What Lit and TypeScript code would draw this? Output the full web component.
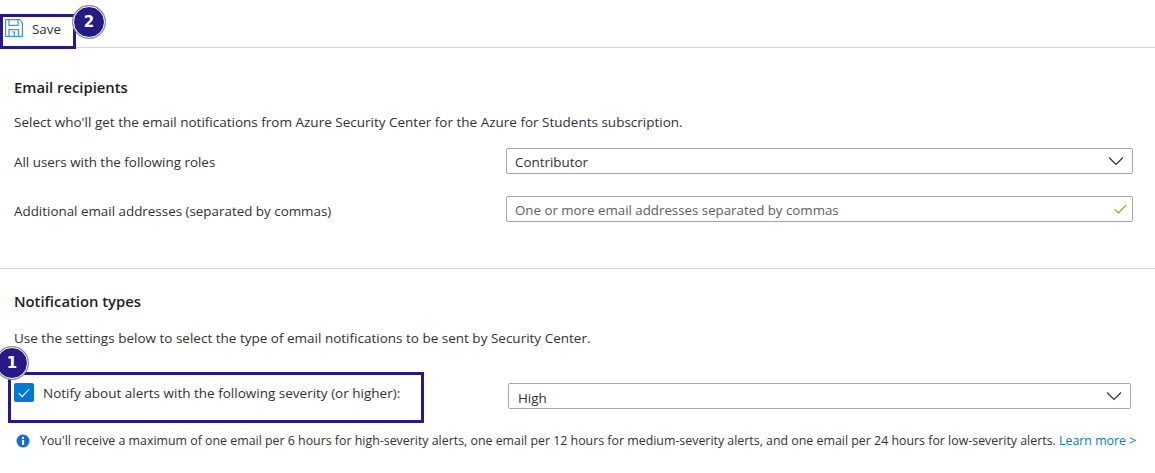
import { LitElement, html, css } from "lit";
import { customElement } from "lit/decorators.js";

@customElement("app-root")
export class AppRoot extends LitElement {
  static styles = css`
    :host { display: block; position: relative; width: 1155px; height: 473px; overflow: hidden; background: #fff;
      font-family: "Open Sans", "Noto Sans", sans-serif; font-size: 13.4px; color: #323130; }
    .toolbar { height: 38px; border-bottom: 1px solid #d6d6d6; display: flex; align-items: flex-end; padding: 0 0 9px 5px; gap: 9px; }
    .toolbar svg { display: block; margin-bottom: 1px; }
    .toolbar span { line-height: 20px; margin-bottom: -1px; }
    .section { padding: 0 22px 0 14px; }
    .s1 { height: 220px; border-bottom: 1px solid #d6d6d6; }
    h2 { margin: 0; font-size: 14.8px; font-weight: 600; color: #201f1e; line-height: 20px; }
    .s1 h2 { padding-top: 29px; }
    .s2 h2 { padding-top: 22px; }
    p { margin: 0; line-height: 18px; font-size: 13.5px; }
    .s1 p { margin-top: 16px; }
    .s2 p { margin-top: 18px; }
    .row { display: grid; grid-template-columns: 492px 627px; align-items: center; height: 26px; }
    .r1 { margin-top: 17px; }
    .r2 { margin-top: 22px; }
    .r1 > span { padding-top: 2px; }
    .r2 > span { padding-top: 4px; }
    .field { box-sizing: border-box; height: 26px; border: 1px solid #a6a6a6; border-radius: 2px; display: flex; align-items: center; justify-content: space-between; padding: 0 8px 0 8px; }
    .field > span { padding-top: 1px; }
    .r2 .field { padding-right: 5px; }
    .ph { color: #605e5c; font-size: 13.3px; padding-top: 2px !important; }
    .notify { display: grid; grid-template-columns: 494px 623px; margin-top: 36px; height: 26px; }
    .notify .field { padding-left: 9px; }
    .notify .field > span { padding-top: 3px; }
    .check { display: flex; align-items: flex-start; gap: 9px; }
    .box { width: 20px; height: 19px; background: #0078d4; border-radius: 2px; display: flex; align-items: center; justify-content: center; }
    .check span { line-height: 18px; font-size: 13.5px; padding-top: 1px; }
    .info { display: flex; align-items: center; gap: 10px; margin-top: 23px; padding-left: 2px; white-space: nowrap; font-size: 12.38px; line-height: 18px; }
    .info svg { flex: none; }
    .info a { color: #0078d4; text-decoration: none; }
    .mark { position: absolute; box-sizing: border-box; border: 3px solid #261a85; }
    .m-save { left: 0; top: 14px; width: 76px; height: 35px; }
    .m-notify { left: 8px; top: 372px; width: 416px; height: 51px; }
    .badge { position: absolute; box-sizing: border-box; width: 32px; height: 32px; border-radius: 50%; background: #261a85; border: 1.5px solid #fff; color: #fff; font-family: "DejaVu Sans", sans-serif; font-weight: 700; font-size: 15px; display: flex; align-items: center; justify-content: center; box-shadow: 0 0 0 1px #8a8a8a; }
    .b2 { left: 73px; top: 6px; }
    .b1 { left: -4px; top: 347px; }
  `;

  private chevron() {
    return html`<svg width="16" height="10" viewBox="0 0 16 10"><path d="M1 1.5 8 8.5 15 1.5" fill="none" stroke="#323130" stroke-width="1.2"/></svg>`;
  }

  render() {
    return html`
      <div class="toolbar">
        <svg width="18" height="18" viewBox="0 0 18 18" fill="none" stroke="#3a96dd" stroke-width="1.2">
          <path d="M.6.6h14l2.8 2.8v14H.6z"/><path d="M4 .8v5.6h9V.8"/><path d="M4 17.2v-6.6h9.5v6.6"/><path d="M6.8 13h2.6v4"/>
        </svg>
        <span>Save</span>
      </div>
      <div class="section s1">
        <h2>Email recipients</h2>
        <p>Select who'll get the email notifications from Azure Security Center for the Azure for Students subscription.</p>
        <div class="row r1"><span>All users with the following roles</span>
          <div class="field"><span>Contributor</span>${this.chevron()}</div></div>
        <div class="row r2"><span>Additional email addresses (separated by commas)</span>
          <div class="field"><span class="ph">One or more email addresses separated by commas</span>
            <svg width="13" height="10" viewBox="0 0 13 10"><path d="M.8 5.4 4.4 9 12.4.8" fill="none" stroke="#6bb700" stroke-width="1.1"/></svg></div></div>
      </div>
      <div class="section s2">
        <h2>Notification types</h2>
        <p>Use the settings below to select the type of email notifications to be sent by Security Center.</p>
        <div class="notify">
          <div class="check"><div class="box"><svg width="12" height="10" viewBox="0 0 12 10"><path d="M.8 5.2 4.2 8.6 11.2 1" fill="none" stroke="#fff" stroke-width="1.1"/></svg></div>
            <span>Notify about alerts with the following severity (or higher):</span></div>
          <div class="field"><span>High</span>${this.chevron()}</div>
        </div>
        <div class="info">
          <svg width="14" height="14" viewBox="0 0 14 14"><circle cx="7" cy="7" r="6.5" fill="#0f6cd8"/><rect x="6" y="6" width="2.1" height="5" fill="#fff"/><circle cx="7" cy="3.9" r="1.2" fill="#fff"/></svg>
          <span>You'll receive a maximum of one email per 6 hours for high-severity alerts, one email per 12 hours for medium-severity alerts, and one email per 24 hours for low-severity alerts. <a>Learn more &gt;</a></span>
        </div>
      </div>
      <div class="mark m-save"></div>
      <div class="mark m-notify"></div>
      <div class="badge b2">2</div>
      <div class="badge b1">1</div>
    `;
  }
}
